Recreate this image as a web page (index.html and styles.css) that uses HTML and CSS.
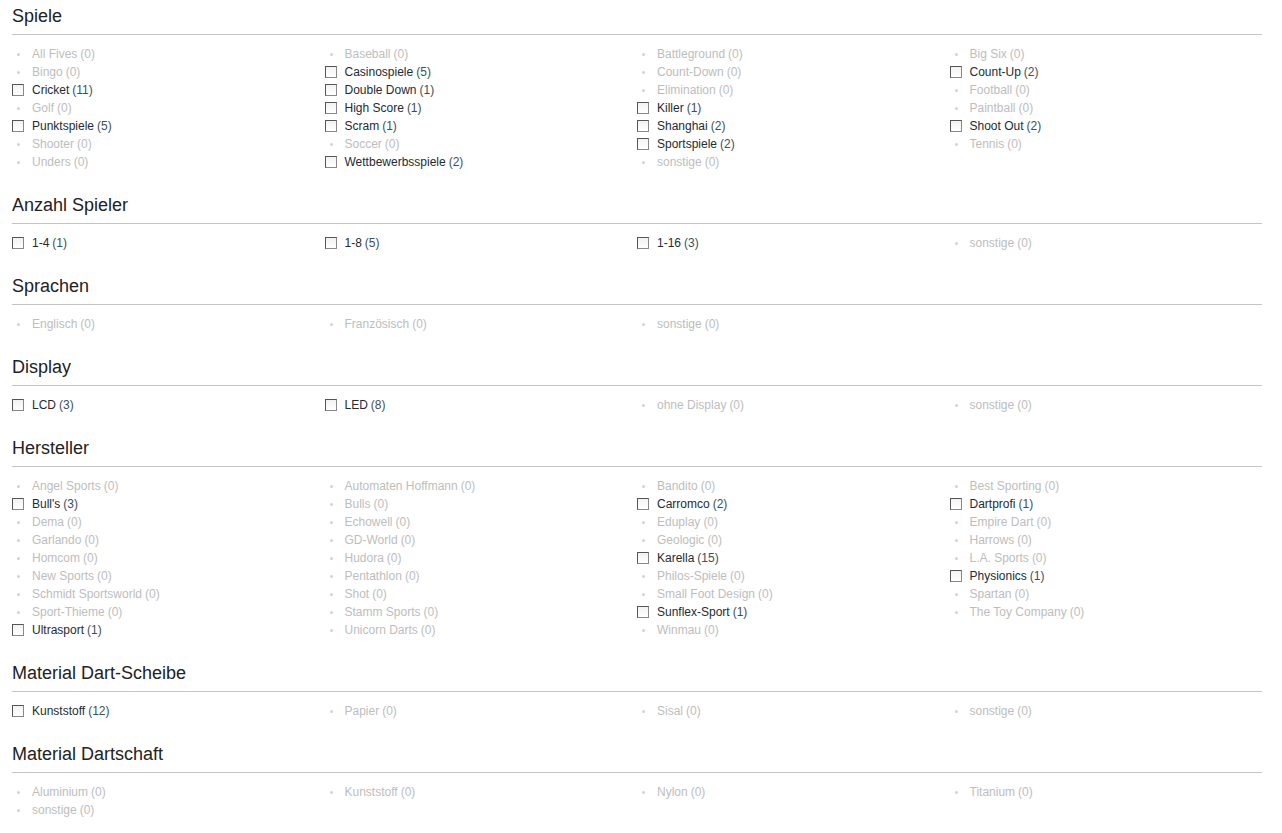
FILE: index.html
```html
<!DOCTYPE html>
<html lang="de">

<head>
  <meta charset="UTF-8" />
  <title>Filter</title>
  <link rel="stylesheet" href="styles.css">
</head>

<body>
  <div class="filter">
    <h2>Spiele</h2>
    <ul>
      <li class="off">All Fives <span>(0)</span></li>
      <li class="off">Baseball <span>(0)</span></li>
      <li class="off">Battleground <span>(0)</span></li>
      <li class="off">Big Six <span>(0)</span></li>
      <li class="off">Bingo <span>(0)</span></li>
      <li class="on">Casinospiele <span>(5)</span></li>
      <li class="off">Count-Down <span>(0)</span></li>
      <li class="on">Count-Up <span>(2)</span></li>
      <li class="on">Cricket <span>(11)</span></li>
      <li class="on">Double Down <span>(1)</span></li>
      <li class="off">Elimination <span>(0)</span></li>
      <li class="off">Football <span>(0)</span></li>
      <li class="off">Golf <span>(0)</span></li>
      <li class="on">High Score <span>(1)</span></li>
      <li class="on">Killer <span>(1)</span></li>
      <li class="off">Paintball <span>(0)</span></li>
      <li class="on">Punktspiele <span>(5)</span></li>
      <li class="on">Scram <span>(1)</span></li>
      <li class="on">Shanghai <span>(2)</span></li>
      <li class="on">Shoot Out <span>(2)</span></li>
      <li class="off">Shooter <span>(0)</span></li>
      <li class="off">Soccer <span>(0)</span></li>
      <li class="on">Sportspiele <span>(2)</span></li>
      <li class="off">Tennis <span>(0)</span></li>
      <li class="off">Unders <span>(0)</span></li>
      <li class="on">Wettbewerbsspiele <span>(2)</span></li>
      <li class="off">sonstige <span>(0)</span></li>
    </ul>
  </div>

  <div class="filter">
    <h2>Anzahl Spieler</h2>
    <ul>
      <li class="on">1-4 <span>(1)</span></li>
      <li class="on">1-8 <span>(5)</span></li>
      <li class="on">1-16 <span>(3)</span></li>
      <li class="off">sonstige <span>(0)</span></li>
    </ul>
  </div>

  <div class="filter">
    <h2>Sprachen</h2>
    <ul>
      <li class="off">Englisch <span>(0)</span></li>
      <li class="off">Französisch <span>(0)</span></li>
      <li class="off">sonstige <span>(0)</span></li>
    </ul>
  </div>

  <div class="filter">
    <h2>Display</h2>
    <ul>
      <li class="on">LCD <span>(3)</span></li>
      <li class="on">LED <span>(8)</span></li>
      <li class="off">ohne Display <span>(0)</span></li>
      <li class="off">sonstige <span>(0)</span></li>
    </ul>
  </div>

  <div class="filter">
    <h2>Hersteller</h2>
    <ul>
      <li class="off">Angel Sports <span>(0)</span></li>
      <li class="off">Automaten Hoffmann <span>(0)</span></li>
      <li class="off">Bandito <span>(0)</span></li>
      <li class="off">Best Sporting <span>(0)</span></li>
      <li class="on">Bull's <span>(3)</span></li>
      <li class="off">Bulls <span>(0)</span></li>
      <li class="on">Carromco <span>(2)</span></li>
      <li class="on">Dartprofi <span>(1)</span></li>
      <li class="off">Dema <span>(0)</span></li>
      <li class="off">Echowell <span>(0)</span></li>
      <li class="off">Eduplay <span>(0)</span></li>
      <li class="off">Empire Dart <span>(0)</span></li>
      <li class="off">Garlando <span>(0)</span></li>
      <li class="off">GD-World <span>(0)</span></li>
      <li class="off">Geologic <span>(0)</span></li>
      <li class="off">Harrows <span>(0)</span></li>
      <li class="off">Homcom <span>(0)</span></li>
      <li class="off">Hudora <span>(0)</span></li>
      <li class="on">Karella <span>(15)</span></li>
      <li class="off">L.A. Sports <span>(0)</span></li>
      <li class="off">New Sports <span>(0)</span></li>
      <li class="off">Pentathlon <span>(0)</span></li>
      <li class="off">Philos-Spiele <span>(0)</span></li>
      <li class="on">Physionics <span>(1)</span></li>
      <li class="off">Schmidt Sportsworld <span>(0)</span></li>
      <li class="off">Shot <span>(0)</span></li>
      <li class="off">Small Foot Design <span>(0)</span></li>
      <li class="off">Spartan <span>(0)</span></li>
      <li class="off">Sport-Thieme <span>(0)</span></li>
      <li class="off">Stamm Sports <span>(0)</span></li>
      <li class="on">Sunflex-Sport <span>(1)</span></li>
      <li class="off">The Toy Company <span>(0)</span></li>
      <li class="on">Ultrasport <span>(1)</span></li>
      <li class="off">Unicorn Darts <span>(0)</span></li>
      <li class="off">Winmau <span>(0)</span></li>
    </ul>
  </div>

  <div class="filter">
    <h2>Material Dart-Scheibe</h2>
    <ul>
      <li class="on">Kunststoff <span>(12)</span></li>
      <li class="off">Papier <span>(0)</span></li>
      <li class="off">Sisal <span>(0)</span></li>
      <li class="off">sonstige <span>(0)</span></li>
    </ul>
  </div>

  <div class="filter">
    <h2>Material Dartschaft</h2>
    <ul>
      <li class="off">Aluminium <span>(0)</span></li>
      <li class="off">Kunststoff <span>(0)</span></li>
      <li class="off">Nylon <span>(0)</span></li>
      <li class="off">Titanium <span>(0)</span></li>
      <li class="off">sonstige <span>(0)</span></li>
    </ul>
  </div>
</body>

</html>
```

FILE: styles.css
```css
body {
  margin: 0 20px 0 12px;
  padding-top: 1px;
  background-color: white;
  color: #333;
  font-family: "Liberation Sans", Arial, sans-serif;
}

.filter {
  margin-bottom: 19px;
}

.filter h2 {
  margin: 0;
  padding: 4px 0 7px 0;
  font-size: 18px;
  line-height: 22px;
  font-weight: normal;
  color: #222;
  border-bottom: 1px solid #c4c4c4;
}

.filter ul {
  list-style: none;
  margin: 10px 0 0 0;
  padding: 0;
  display: grid;
  grid-template-columns: repeat(4, 1fr);
}

.filter li {
  display: flex;
  align-items: center;
  height: 18px;
  font-size: 12px;
  white-space: nowrap;
}

.filter li span {
  margin-left: 3px;
}

/* clickable option: box before the label */
.filter li.on {
  color: #222b33;
  cursor: pointer;
}

.filter li.on span {
  color: #3c4f5c;
}

.filter li.on::before {
  content: "";
  box-sizing: border-box;
  width: 12px;
  height: 12px;
  margin-right: 8px;
  border: 1px solid #555;
  border-right-color: #888;
  border-bottom-color: #888;
  background: linear-gradient(#f2f2f2, #fff);
}

/* empty option: just a dot */
.filter li.off {
  color: #bdbdbd;
}

.filter li.off::before {
  content: "";
  width: 3px;
  height: 3px;
  margin: 0 12px 0 5px;
  border-radius: 50%;
  background-color: #d2d2d2;
}
```
